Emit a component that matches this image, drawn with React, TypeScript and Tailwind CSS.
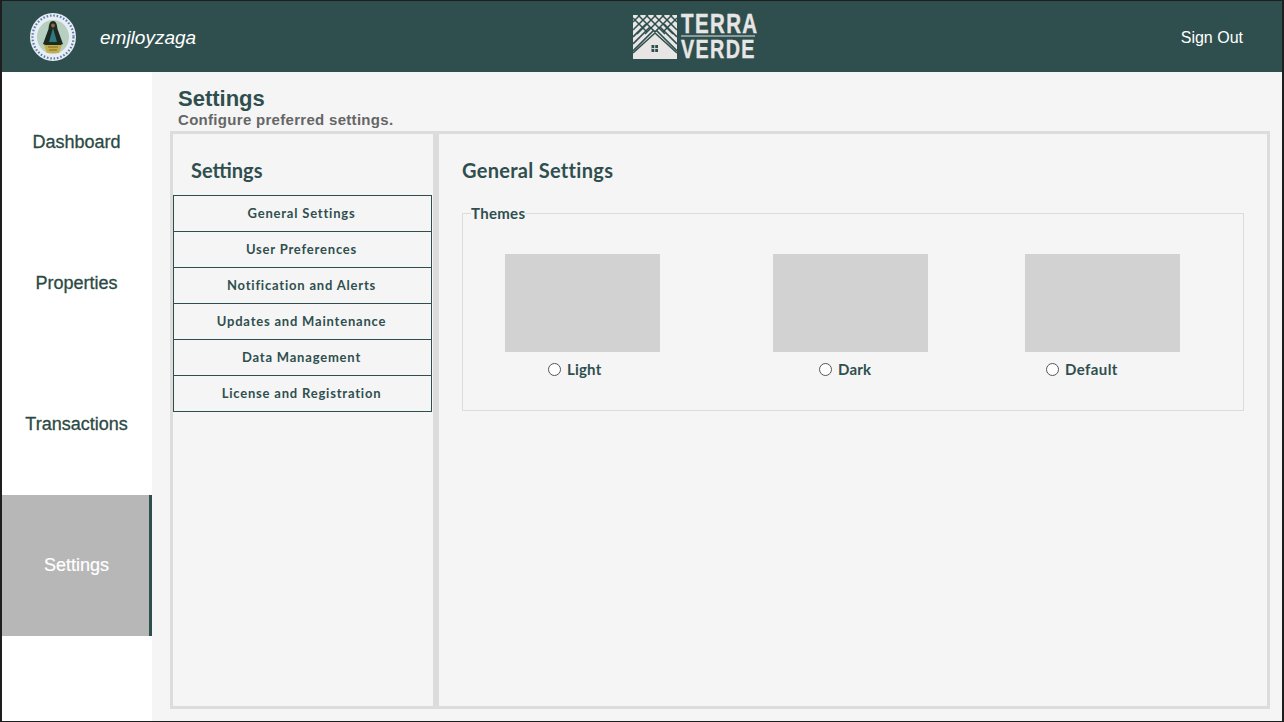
const navItems = ["Dashboard", "Properties", "Transactions", "Settings"];

const settingsLinks = [
  "General Settings",
  "User Preferences",
  "Notification and Alerts",
  "Updates and Maintenance",
  "Data Management",
  "License and Registration",
];

const themeBoxes = [
  { name: "Light", margin: "ml-[42px]" },
  { name: "Dark", margin: "ml-[113px]" },
  { name: "Default", margin: "ml-[97px]" },
];

const gothic = "font-['Lato','Open_Sans',sans-serif]";
const radio = "m-0 h-[13px] w-[13px] appearance-none rounded-full border border-[#555555] bg-white";

function ParishSeal() {
  return (
    <svg width="46" height="48" viewBox="0 0 46 48">
      <ellipse cx="23" cy="24" rx="23" ry="24" fill="#e9eef2" />
      <ellipse cx="23" cy="24" rx="20.5" ry="21.5" fill="none" stroke="#5b7db5" strokeWidth="2.2" strokeDasharray="1.6 1.8" />
      <ellipse cx="23" cy="24" rx="16" ry="17" fill="#b7cfc0" />
      <path d="M23 8 C19.5 8 19 12 18.5 16 L13 31 C17 33.5 29 33.5 33 31 L27.5 16 C27 12 26.5 8 23 8 Z" fill="#1d2a22" />
      <path d="M23 15 L19 29 H27 Z" fill="#2f7a80" />
      <circle cx="23" cy="12.5" r="2" fill="#8a6a3a" />
      <path d="M14 32 L32 32 L29 40 H17 Z" fill="#c4ad4a" />
      <path d="M18 34 H28 M19 37 H27" stroke="#7d6c20" strokeWidth="1" />
    </svg>
  );
}

function LogoMark() {
  return (
    <svg width="44" height="44" viewBox="0 0 44 44">
      <rect width="44" height="44" fill="#e8e6e4" />
      {/* diamond lattice across the top */}
      <g stroke="#2f4f4f" strokeWidth="1.5">
        <path d="M0 7 L7 0 M0 15 L15 0 M4 19 L23 0 M12 19 L31 0 M22 17 L39 0 M30 17 L44 3" />
        <path d="M37 0 L44 7 M29 0 L44 15 M21 0 L40 19 M13 0 L32 19 M5 0 L22 17 M0 3 L14 17" />
      </g>
      {/* chevrons running down to the eaves */}
      <g stroke="#2f4f4f" strokeWidth="1.7" fill="none">
        <path d="M0 22 L13 9 M0 29 L17 12 M0 36 L21 15" />
        <path d="M44 22 L31 9 M44 29 L27 12 M44 36 L23 15" />
      </g>
      {/* house */}
      <path d="M22 20 L44 39 V44 H0 V39 Z" fill="#e8e6e4" />
      <path d="M0 38 L22 18 L44 38" fill="none" stroke="#2f4f4f" strokeWidth="1.6" />
      <rect x="18.5" y="30" width="6.5" height="7" fill="#2f4f4f" />
      <path d="M21.75 30 V37 M18.5 33.5 H25" stroke="#e8e6e4" strokeWidth="0.9" />
    </svg>
  );
}

function Header() {
  return (
    <header className="flex h-[71px] shrink-0 items-center bg-[#2f4f4f] text-white">
      <div className="ml-[28px] flex w-[598px] items-center">
        <ParishSeal />
        <span className="ml-[24px] mt-[3px] font-['Liberation_Sans',sans-serif] text-[19px] italic text-white">emjloyzaga</span>
      </div>
      <div className="ml-[5px] flex items-center">
        <LogoMark />
        <div className="ml-[4px] flex w-[76px] flex-col font-['Liberation_Sans',sans-serif] font-bold leading-none text-[#e8e6e4] [-webkit-text-stroke:0.4px_#e8e6e4]">
          <span className="origin-left scale-x-[0.76] whitespace-nowrap text-[27px] leading-[21px] tracking-[1.8px]">TERRA</span>
          <span className="h-[2px] w-[74px] bg-[#8a9a9a] [-webkit-text-stroke:0]" />
          <span className="mt-[2px] origin-left scale-x-[0.76] whitespace-nowrap text-[26px] leading-[20px] tracking-[1.8px]">VERDE</span>
        </div>
      </div>
      <a className="ml-auto mr-[39px] mt-[2px] font-['Liberation_Sans',sans-serif] text-[16px] text-white">Sign Out</a>
    </header>
  );
}

function Sidebar() {
  return (
    <nav className="flex w-[150px] shrink-0 flex-col bg-white font-['Liberation_Sans',sans-serif] text-[18px]">
      {navItems.map((item) =>
        item === "Settings" ? (
          <div key={item} className="flex h-[141px] items-center justify-center border-r-[3px] border-[#2f4f4f] bg-[#b7b7b7] pl-[2px] text-white [-webkit-text-stroke:0.2px_#ffffff]">
            {item}
          </div>
        ) : (
          <div key={item} className="flex h-[141px] items-center justify-center pr-px text-[#2b4a44] [-webkit-text-stroke:0.3px_#2b4a44]">
            {item}
          </div>
        )
      )}
    </nav>
  );
}

export default function App() {
  return (
    <div className="h-[722px] w-[1284px] overflow-hidden bg-[#1e1e1e] pb-px pl-[2px] pr-[2px] pt-px">
      <div className="flex h-full flex-col">
        <Header />
        <div className="flex min-h-0 flex-1">
          <Sidebar />
          <main className="flex flex-1 flex-col bg-[#f5f5f5] pl-[18px] pr-[12px]">
            <div className="h-[59px] pl-[8px] pt-[15px] font-['Liberation_Sans',sans-serif] text-[#2f4f4f]">
              <h1 className="text-[22px] font-bold leading-[24px]">Settings</h1>
              <p className="text-[15px] font-bold leading-[18px] tracking-[0.3px] text-[#666666]">Configure preferred settings.</p>
            </div>
            <div className="flex h-[578px] text-[#2f4f4f]">
              <aside className="w-[266px] border-[3px] border-[#dcdcdc]">
                <h2 className={`${gothic} pl-[18px] pt-[24px] text-[20px] font-bold leading-[24px]`}>Settings</h2>
                <div className="mt-[13px] w-[259px] border-t border-[#2f4f4f]">
                  {settingsLinks.map((link) => (
                    <div key={link} className={`${gothic} flex h-[36px] items-center justify-center border-x border-b border-[#2f4f4f] pr-[2px] text-[13px] font-bold tracking-[0.8px]`}>
                      {link}
                    </div>
                  ))}
                </div>
              </aside>
              <section className="flex-1 border-[3px] border-[#dcdcdc] pl-[23px] pr-[23px]">
                <h2 className={`${gothic} pt-[24px] text-[20px] font-bold leading-[24px] tracking-[0.3px]`}>General Settings</h2>
                <fieldset className="mt-[23px] h-[206px] border border-[#dcdcdc]">
                  <legend className={`${gothic} ml-[8px] text-[15px] font-bold leading-[16px] tracking-[0.3px]`}>Themes</legend>
                  <div className="mt-[33px] flex">
                    {themeBoxes.map((t) => (
                      <div key={t.name} className={`${t.margin} h-[98px] w-[155px] bg-[#d2d2d2]`} />
                    ))}
                  </div>
                  <div className="mt-[8px] flex">
                    <label className={`${gothic} ml-[85px] flex w-[271px] items-center text-[15px] font-bold leading-[18px] tracking-[0.2px]`}>
                      <input type="radio" name="theme" className={radio} />
                      <span className="ml-[6px]">Light</span>
                    </label>
                    <label className={`${gothic} flex w-[227px] items-center text-[15px] font-bold leading-[18px] tracking-[0.2px]`}>
                      <input type="radio" name="theme" className={radio} />
                      <span className="ml-[6px]">Dark</span>
                    </label>
                    <label className={`${gothic} flex items-center text-[15px] font-bold leading-[18px] tracking-[0.4px]`}>
                      <input type="radio" name="theme" className={radio} />
                      <span className="ml-[6px]">Default</span>
                    </label>
                  </div>
                </fieldset>
              </section>
            </div>
          </main>
        </div>
      </div>
    </div>
  );
}
